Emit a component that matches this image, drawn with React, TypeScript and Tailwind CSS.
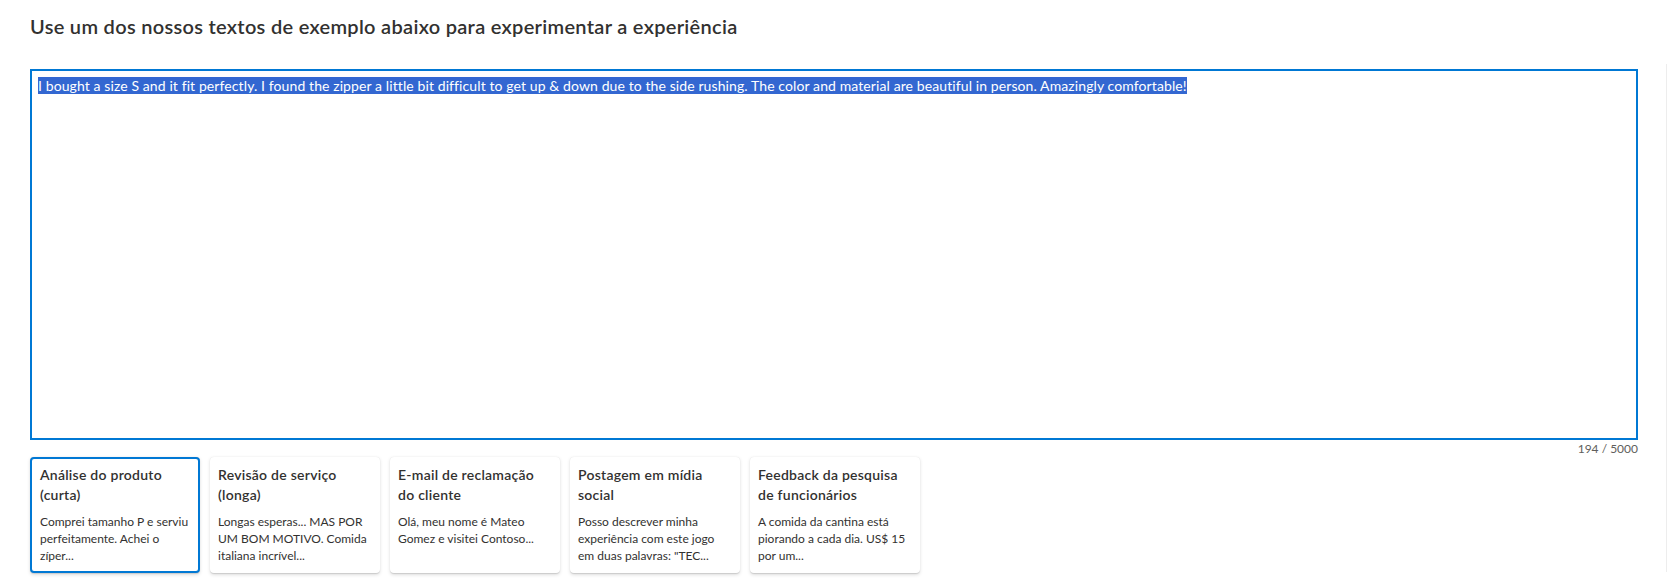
import React from "react"

const amostras = [
  {
    title: "Análise do produto (curta)",
    text: "Comprei tamanho P e serviu perfeitamente. Achei o zíper...",
  },
  {
    title: "Revisão de serviço (longa)",
    text: "Longas esperas... MAS POR UM BOM MOTIVO. Comida italiana incrível...",
  },
  {
    title: "E-mail de reclamação do cliente",
    text: "Olá, meu nome é Mateo Gomez e visitei Contoso...",
  },
  {
    title: "Postagem em mídia social",
    text: 'Posso descrever minha experiência com este jogo em duas palavras: "TEC...',
  },
  {
    title: "Feedback da pesquisa de funcionários",
    text: "A comida da cantina está piorando a cada dia. US$ 15 por um...",
  },
]

const texto =
  "I bought a size S and it fit perfectly. I found the zipper a little bit difficult to get up & down due to the side rushing. The color and material are beautiful in person. Amazingly comfortable!"

export default function App() {
  const selected = 0

  return (
    <div className="flex h-[580px] w-[1672px] bg-white font-['Lato','Liberation_Sans',sans-serif] text-[#323130]">
      <main className="flex-1 pl-[30px] pr-[28px]">
        <h1 className="mt-[12px] text-[20px] leading-[28px] font-semibold tracking-[0.3px]">
          Use um dos nossos textos de exemplo abaixo para experimentar a experiência
        </h1>

        <div className="mt-[29px] h-[371px] border-2 border-[#0078d4] px-[6px] pt-[6px] text-[14px] leading-[17px] tracking-[0.1px]">
          <span className="bg-[#3367d1] text-white">{texto}</span>
        </div>
        <div className="h-[17px] pt-[2px] text-right text-[12px] leading-[14px] text-[#605e5c]">
          {texto.length} / 5000
        </div>

        <div className="flex gap-[10px]">
          {amostras.map((item, index) => (
            <button
              key={index}
              className={
                index === selected
                  ? "flex h-[116px] w-[170px] flex-col items-start justify-start rounded-[4px] border-2 border-[#0078d4] bg-white pt-[6px] pr-[4px] pl-[8px] text-left shadow-[0_1.6px_3.6px_rgba(0,0,0,0.13),0_0.3px_0.9px_rgba(0,0,0,0.11)]"
                  : "flex h-[116px] w-[170px] flex-col items-start justify-start rounded-[4px] bg-white px-[8px] pt-[8px] text-left shadow-[0_1.6px_3.6px_rgba(0,0,0,0.13),0_0.3px_0.9px_rgba(0,0,0,0.11)]"
              }
            >
              <div className="text-[14px] leading-[20px] font-semibold tracking-[0.25px]">{item.title}</div>
              <p className="mt-[8px] text-[12px] leading-[17px]">{item.text}</p>
            </button>
          ))}
        </div>
      </main>
      <div className="mt-[64px] h-[508px] w-[6px] border-l border-[#ededed]" />
    </div>
  )
}
